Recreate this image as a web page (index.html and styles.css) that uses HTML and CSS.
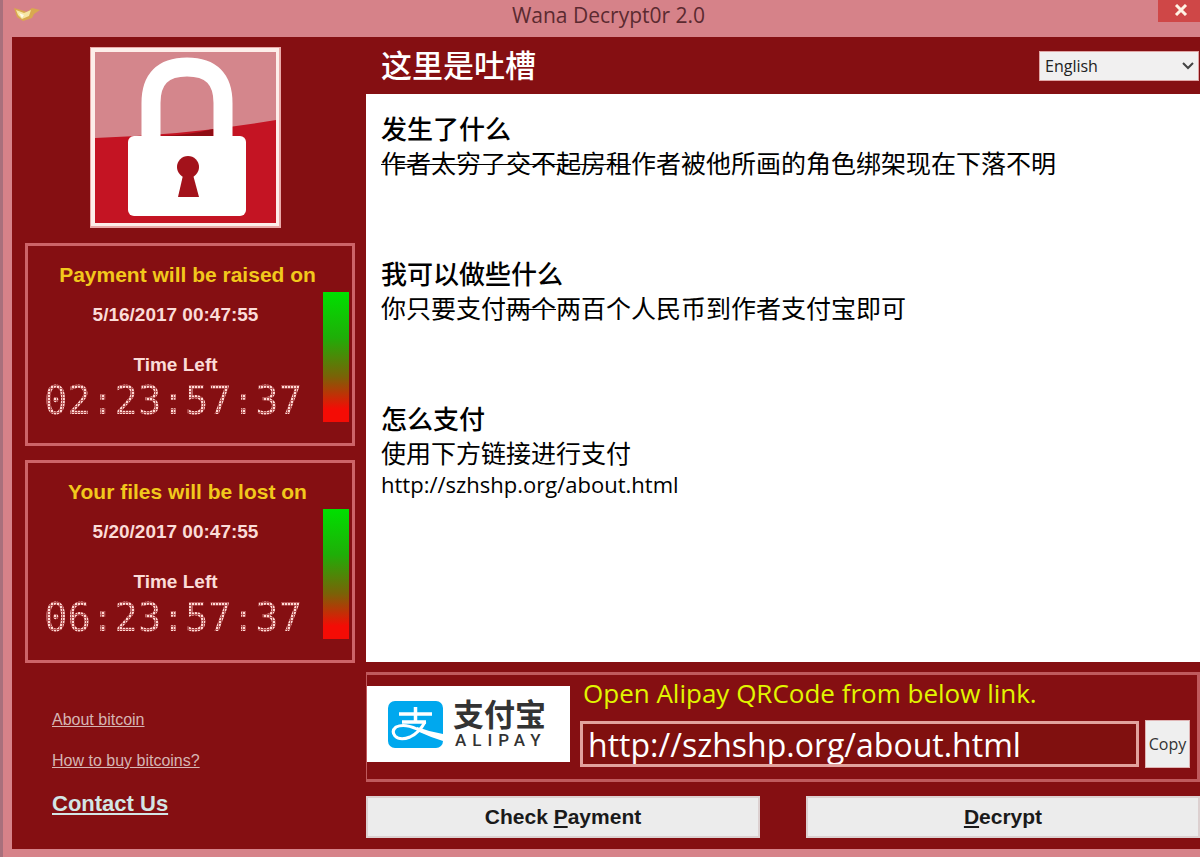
FILE: index.html
```html
<!DOCTYPE html>
<html lang="zh-CN">
<head>
    <meta charset="UTF-8">
    <meta name="viewport" content="width=device-width, initial-scale=1.0">
    <title>Wana Decrypt0r 2.0</title>
    <link rel="stylesheet" href="styles.css">
</head>
<body>
    <header class="titlebar">
        <svg class="app-icon" viewBox="0 0 28 18" aria-hidden="true">
            <path d="M1 3 L8 5 L14 7 L19 3 L27 5 L21 9 L19 13 L10 16 L4 12 Z" fill="#d9a94e"/>
            <path d="M3 5 L11 8 L18 5 L16 11 L9 14 L5 10 Z" fill="#f6e7a4"/>
            <path d="M6 8 L11 10 L9 13 Z" fill="#fffbe8"/>
        </svg>
        <h1>Wana Decrypt0r 2.0</h1>
        <button type="button" class="close" aria-label="Close">
            <svg viewBox="0 0 14 12" aria-hidden="true">
                <path d="M2 1 L12 11 M12 1 L2 11" stroke="#fff3e4" stroke-width="3"/>
            </svg>
        </button>
    </header>

    <main class="window">
        <aside class="sidebar">
            <svg class="lock" viewBox="0 0 191 181" role="img" aria-label="Locked">
                <rect width="191" height="181" fill="#e9a9a8"/>
                <rect x="1" y="1" width="188" height="178" fill="#fdeeea"/>
                <rect x="5" y="5" width="181" height="171" fill="#d4868c"/>
                <path d="M5 91 Q100 88 186 73 V176 H5 Z" fill="#c41423"/>
                <path d="M70 89 Q100 88 123 82 V92 H70 Z" fill="#8f0d14"/>
                <path d="M61 98 V56 Q61 20 97 20 Q133 20 133 56 V98" fill="none" stroke="#fff" stroke-width="19"/>
                <rect x="38" y="89" width="118" height="80" rx="6" fill="#fff"/>
                <circle cx="98" cy="120" r="11" fill="#a3121b"/>
                <path d="M94 124 H102 L109 150 H88 Z" fill="#a3121b"/>
            </svg>

            <section class="timer">
                <div class="timer-text">
                    <h2>Payment will be raised on</h2>
                    <p class="date">5/16/2017 00:47:55</p>
                    <p class="left">Time Left</p>
                    <p class="clock">02:23:57:37</p>
                </div>
                <div class="bar"></div>
            </section>

            <section class="timer">
                <div class="timer-text">
                    <h2>Your files will be lost on</h2>
                    <p class="date">5/20/2017 00:47:55</p>
                    <p class="left">Time Left</p>
                    <p class="clock">06:23:57:37</p>
                </div>
                <div class="bar"></div>
            </section>

            <nav class="links">
                <a href="#">About bitcoin</a>
                <a href="#">How to buy bitcoins?</a>
                <a href="#" class="contact">Contact Us</a>
            </nav>
        </aside>

        <div class="content">
            <div class="heading">
                <h2>这里是吐槽</h2>
                <select aria-label="Language">
                    <option>English</option>
                </select>
            </div>

            <article class="message">
                <section>
                    <h3>发生了什么</h3>
                    <p><s>作者太穷了交不起房租</s>作者被他所画的角色绑架现在下落不明</p>
                </section>
                <section>
                    <h3>我可以做些什么</h3>
                    <p>你只要支付<s>两个</s>两百个人民币到作者支付宝即可</p>
                </section>
                <section>
                    <h3>怎么支付</h3>
                    <p>使用下方链接进行支付</p>
                    <p class="url">http://szhshp.org/about.html</p>
                </section>
            </article>

            <section class="payment">
                <div class="alipay">
                    <svg class="alipay-icon" viewBox="0 0 55 47" aria-hidden="true">
                        <rect width="55" height="47" rx="7" fill="#00a8ee"/>
                        <path d="M11 13 H44 M27.500 6 V22 M14 21 H38" fill="none" stroke="#fff" stroke-width="3.500"/>
                        <path d="M37 21 Q31 32 22 36 Q12 40 7 35 Q3 30 8 26 Q16 22 29 28 Q42 34 55 37" fill="none" stroke="#fff" stroke-width="3"/>
                        <path d="M29 26 Q42 31 55 33 V40 Q42 36 29 30 Z" fill="#fff"/>
                    </svg>
                    <div class="alipay-name">
                        <span class="cn">支付宝</span>
                        <span class="en">ALIPAY</span>
                    </div>
                </div>
                <div class="address">
                    <label for="address">Open Alipay QRCode from below link.</label>
                    <div class="address-row">
                        <input type="text" id="address" value="http://szhshp.org/about.html" readonly>
                        <button type="button" class="copy">Copy</button>
                    </div>
                </div>
            </section>

            <div class="actions">
                <button type="button">Check <u>P</u>ayment</button>
                <button type="button"><u>D</u>ecrypt</button>
            </div>
        </div>
    </main>
</body>
</html>
```
FILE: styles.css
```css
* {
    box-sizing: border-box;
}
body {
    display: flex;
    flex-direction: column;
    min-height: 100vh;
    margin: 0;
    padding-bottom: 8px;
    background-color: #d68289;
    border-left: 3px solid #a8707c;
    font-family: "Liberation Sans", Arial, sans-serif;
}
h1, h2, h3, p {
    margin: 0;
}
.titlebar {
    display: flex;
    align-items: flex-start;
    height: 37px;
    padding-left: 10px;
}
.app-icon {
    width: 28px;
    height: 18px;
    margin-top: 5px;
}
.titlebar h1 {
    flex: 1;
    padding-left: 18px;
    color: #5b2a30;
    font-family: "Open Sans", sans-serif;
    font-size: 21px;
    font-weight: 400;
    line-height: 30px;
    text-align: center;
}
.close {
    width: 42px;
    height: 22px;
    padding: 0 0 2px 4px;
    background-color: #cf4747;
    border: none;
    line-height: 0;
}
.close svg {
    width: 14px;
    height: 12px;
}
.window {
    display: grid;
    flex: 1;
    grid-template-columns: 354px 1fr;
    margin-left: 9px;
    background-color: #850f12;
}

/* left column */
.sidebar {
    padding: 10px 11px 0 13px;
}
.lock {
    display: block;
    width: 191px;
    margin: 0 auto 15px 65px;
}
.timer {
    display: flex;
    align-items: flex-start;
    height: 203px;
    margin-bottom: 14px;
    padding: 0 3px 0 16px;
    border: 3px solid #cd6468;
}
.timer-text {
    flex: 1;
    min-width: 0;
    color: #fbdcd8;
    text-align: center;
}
.timer h2 {
    margin-top: 15px;
    padding-left: 8px;
    color: #f2c81c;
    font-size: 21px;
    line-height: 28px;
    white-space: nowrap;
}
.timer p {
    padding-right: 16px;
}
.timer .date {
    margin-top: 15px;
    font-size: 19px;
    font-weight: bold;
    line-height: 22px;
}
.timer .left {
    margin-top: 28px;
    font-size: 19px;
    font-weight: bold;
    line-height: 22px;
}
/* dot-matrix digits: the glyphs are filled with a grid of dots */
.timer .clock {
    margin-top: 3px;
    padding: 0;
    background-color: #ffd9d4;
    background-image:
        linear-gradient(#b65354 1px, transparent 1px),
        linear-gradient(90deg, #b65354 1px, transparent 1px);
    background-size: 3px 3px;
    background-clip: text;
    -webkit-background-clip: text;
    color: transparent;
    font-family: "DejaVu Sans Mono", monospace;
    font-size: 39px;
    line-height: 44px;
    text-align: left;
}
.bar {
    width: 26px;
    height: 130px;
    margin-top: 46px;
    background: linear-gradient(#00e000, #1fae08 35%, #7a6207 65%, #f40c05 90%);
}
.links {
    display: flex;
    flex-direction: column;
    align-items: flex-start;
    padding: 31px 0 0 27px;
}
.links a {
    margin-bottom: 17px;
    color: #d6b5b3;
    font-size: 16px;
    line-height: 24px;
}
.links .contact {
    color: #d3e5e5;
    font-size: 22px;
    font-weight: bold;
    line-height: 28px;
}

/* right column */
.content {
    display: flex;
    flex-direction: column;
    min-width: 0;
    font-family: "Open Sans", "Noto Sans CJK SC", sans-serif;
}
.heading {
    display: flex;
    align-items: center;
    justify-content: space-between;
    height: 57px;
    padding: 0 1px 0 15px;
}
.heading h2 {
    padding-bottom: 4px;
    color: #fff;
    font-size: 31px;
    font-weight: 500;
}
.heading select {
    appearance: none;
    width: 160px;
    height: 30px;
    padding: 0 5px;
    background: #f1f0f0 url("data:image/svg+xml,%3Csvg xmlns='http://www.w3.org/2000/svg' viewBox='0 0 12 8'%3E%3Cpath d='M1 1l5 5 5-5' fill='none' stroke='%23444' stroke-width='2'/%3E%3C/svg%3E") no-repeat right 4px center / 12px 8px;
    border: 1px solid #e0a5a5;
    border-radius: 0;
    color: #222;
    font-family: "Open Sans", sans-serif;
    font-size: 16px;
}
.message {
    flex: 1;
    padding: 18px 15px;
    background-color: #fff;
    color: #000;
}
.message section {
    margin-bottom: 78px;
}
.message section:last-child {
    margin-bottom: 0;
}
.message h3 {
    font-size: 26px;
    font-weight: 500;
    line-height: 35px;
}
.message p {
    font-size: 25px;
    line-height: 32px;
}
.message s {
    text-decoration-thickness: 1px;
}
.message .url {
    font-size: 22px;
    line-height: 30px;
}
.payment {
    display: flex;
    align-items: flex-start;
    height: 110px;
    margin-top: 10px;
    border: 3px solid #bf5a5d;
    border-left-width: 1px;
}
.alipay {
    display: flex;
    align-items: center;
    gap: 10px;
    width: 203px;
    height: 76px;
    margin-top: 11px;
    padding-left: 21px;
    background-color: #fff;
}
.alipay-icon {
    width: 55px;
    height: 47px;
}
.alipay-name {
    display: flex;
    flex-direction: column;
    color: #333;
}
.alipay-name .cn {
    font-size: 31px;
    font-weight: 700;
    line-height: 32px;
}
.alipay-name .en {
    padding-left: 2px;
    font-family: Roboto, sans-serif;
    font-size: 17px;
    font-weight: 500;
    letter-spacing: 6px;
    line-height: 20px;
}
.address {
    flex: 1;
    min-width: 0;
    padding: 0 7px 0 10px;
}
.address label {
    display: block;
    padding-left: 3px;
    color: #e1f500;
    font-size: 26px;
    line-height: 36px;
}
.address-row {
    display: flex;
    align-items: center;
    gap: 6px;
    margin-top: 9px;
}
.address input {
    flex: 1;
    min-width: 0;
    height: 46px;
    padding: 0 5px;
    background-color: #80100f;
    border: 3px solid #e2a29d;
    color: #fff;
    font-family: "Open Sans", sans-serif;
    font-size: 32px;
}
.copy {
    width: 45px;
    height: 48px;
    padding: 0;
    background-color: #efefef;
    border: 1px solid #e0b5b5;
    color: #333;
    font-family: "Open Sans", sans-serif;
    font-size: 16px;
}
.actions {
    display: grid;
    grid-template-columns: 1fr 1fr;
    gap: 46px;
    padding: 14px 0 11px;
}
.actions button {
    height: 42px;
    background-color: #ececec;
    border: 2px solid #dcd0d0;
    color: #1a1a1a;
    font-family: "Liberation Sans", Arial, sans-serif;
    font-size: 21px;
    font-weight: bold;
}
```
